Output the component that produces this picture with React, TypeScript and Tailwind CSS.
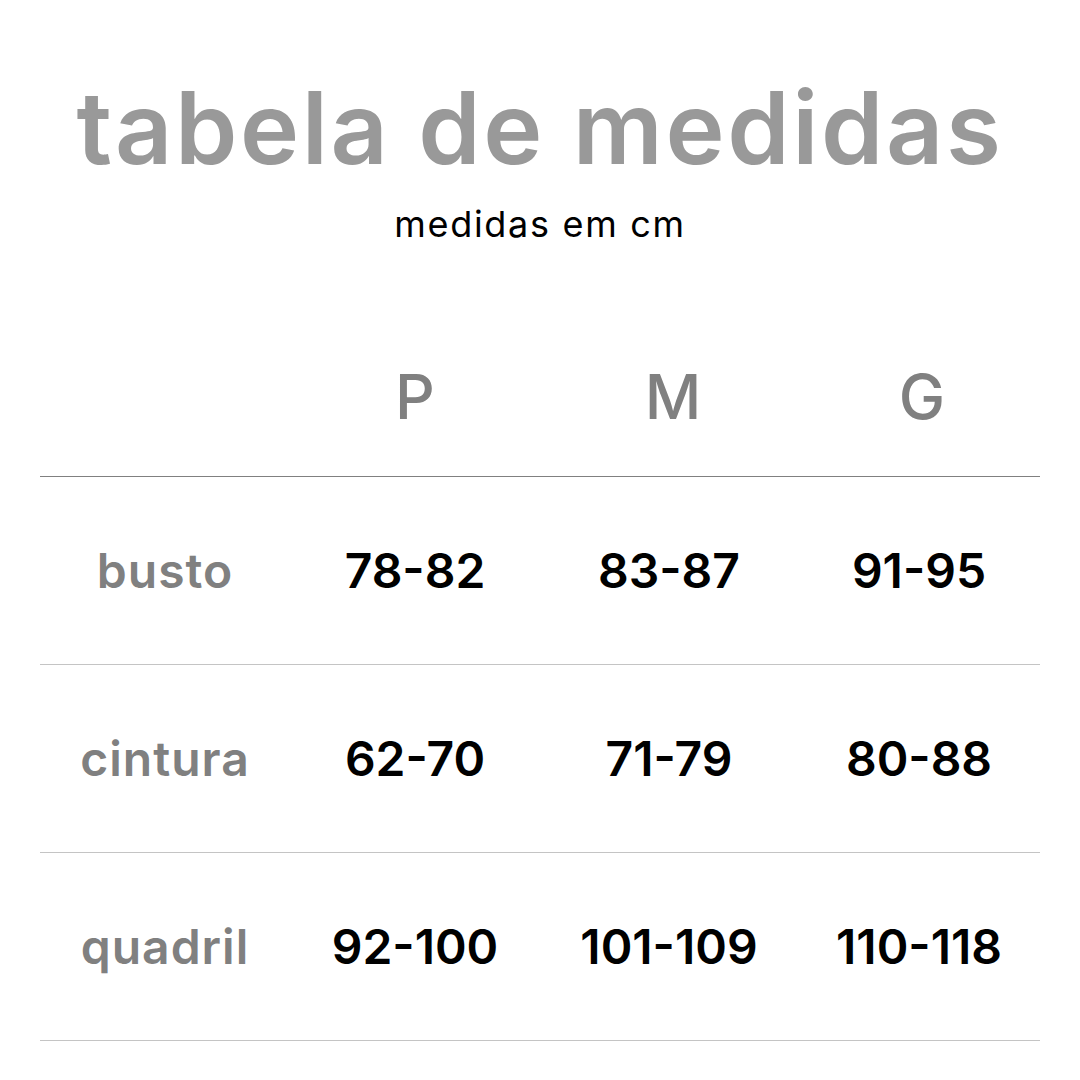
import React from "react";

const rows = [
  { label: "busto", values: ["78-82", "83-87", "91-95"] },
  { label: "cintura", values: ["62-70", "71-79", "80-88"] },
  { label: "quadril", values: ["92-100", "101-109", "110-118"] },
];

export default function App() {
  return (
    <div
      className="w-[1080px] h-[1080px] bg-white flex flex-col items-center overflow-hidden"
      style={{ fontFamily: "Inter, 'Noto Sans', sans-serif" }}
    >
      <h1 className="mt-[73px] text-[100px] leading-[110px] font-semibold text-[#999999] tracking-[2.6px]">
        tabela de medidas
      </h1>
      <p className="mt-[21px] text-[36px] leading-[40px] font-normal text-black tracking-[1.7px]">
        medidas em cm
      </p>
      <div className="mt-[73px] w-[1000px] flex flex-col">
        <div className="grid grid-cols-[250px_250px_258px_242px] h-[160px] items-center border-b-[1.5px] border-[#808080]">
          <div />
          <div className="text-center text-[62px] font-medium text-[#808080] leading-none">P</div>
          <div className="text-center text-[62px] font-medium text-[#808080] leading-none pl-[8px]">M</div>
          <div className="text-center text-[62px] font-medium text-[#808080] leading-none pl-[6px]">G</div>
        </div>
        {rows.map((r) => (
          <div
            key={r.label}
            className="grid grid-cols-[250px_250px_258px_242px] h-[188px] items-center border-b-[1.5px] border-[#c4c4c4]"
          >
            <div className="text-center text-[48px] font-semibold text-[#808080] leading-none tracking-[1px]">
              {r.label}
            </div>
            {r.values.map((v) => (
              <div key={v} className="text-center text-[48px] font-semibold text-black leading-none">
                {v}
              </div>
            ))}
          </div>
        ))}
      </div>
    </div>
  );
}
